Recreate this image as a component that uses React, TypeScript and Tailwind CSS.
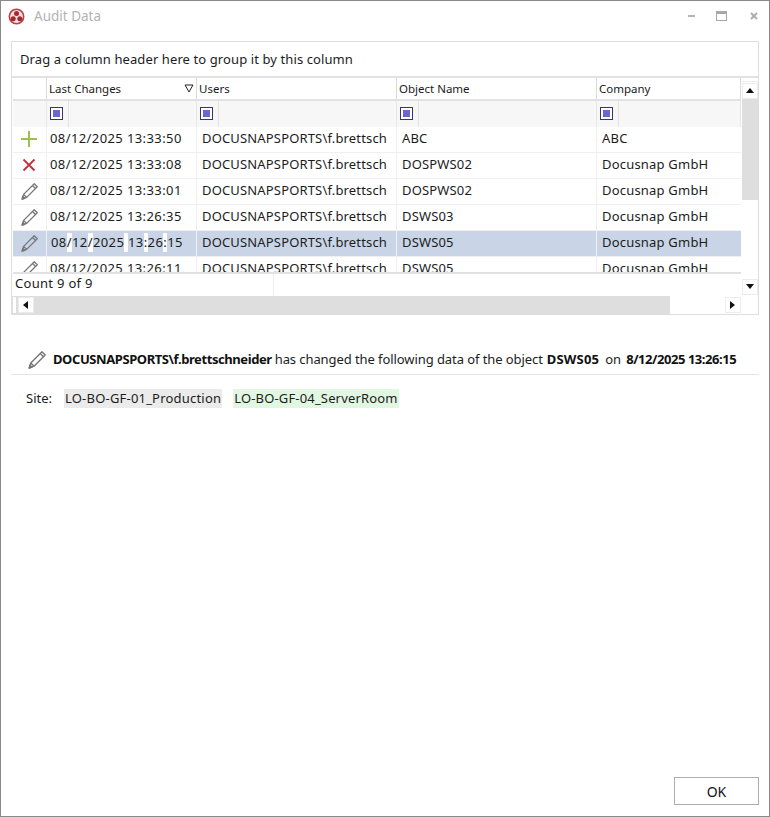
import React from "react";

const F = "font-['Noto_Sans','Open_Sans',sans-serif]";

function Pencil({ size = 20 }: { size?: number }) {
  return (
    <svg width={size} height={size} viewBox="0 0 20 20" fill="none" stroke="#777777" strokeWidth="1.4" strokeLinejoin="round">
      <path d="M15 1.8 L18.2 5 L7 16.2 L2.2 18 L3.8 13 Z" />
      <path d="M13.2 3.6 L16.4 6.8" />
      <path d="M3.8 13 L7 16.2" />
      <path d="M2.2 18 L3 15.3 L5 17.2 Z" fill="#777777" />
    </svg>
  );
}

function Plus() {
  return (
    <svg width="16" height="16" viewBox="0 0 16 16">
      <path d="M8 0 V16 M0 8 H16" stroke="#a0bd52" strokeWidth="2" />
    </svg>
  );
}

function Cross() {
  return (
    <svg width="14" height="14" viewBox="0 0 14 14">
      <path d="M1.5 1.5 L12.5 12.5 M12.5 1.5 L1.5 12.5" stroke="#c4303a" strokeWidth="1.8" />
    </svg>
  );
}

const rows = [
  { icon: "plus", date: "08/12/2025 13:33:50", obj: "ABC", co: "ABC" },
  { icon: "x", date: "08/12/2025 13:33:08", obj: "DOSPWS02", co: "Docusnap GmbH" },
  { icon: "p", date: "08/12/2025 13:33:01", obj: "DOSPWS02", co: "Docusnap GmbH" },
  { icon: "p", date: "08/12/2025 13:26:35", obj: "DSWS03", co: "Docusnap GmbH" },
  { icon: "p", date: "08/12/2025 13:26:15", obj: "DSWS05", co: "Docusnap GmbH", sel: true },
  { icon: "p", date: "08/12/2025 13:26:11", obj: "DSWS05", co: "Docusnap GmbH" },
];

function FilterCell({ w }: { w: string }) {
  return (
    <div className={`${w} shrink-0 flex items-center pl-[3px] border-r border-[#e6e6e6]`}>
      <div className="w-[13px] h-[13px] border border-[#37337a] bg-white flex items-center justify-center mb-[1px]">
        <div className="w-[7px] h-[7px] bg-[#6a66cf]" />
      </div>
      <div className="w-[1px] h-full bg-[#e3e3e3] ml-[5px]" />
    </div>
  );
}

function Head({ w, children, sort }: { w: string; children: string; sort?: boolean }) {
  return (
    <div className={`${w} shrink-0 flex items-center justify-between pl-[2px] pr-[2px] border-r border-[#dcdcdc] text-[11.5px] text-[#1a1a1a]`}>
      <span>{children}</span>
      {sort && (
        <svg width="10" height="9" viewBox="0 0 10 9">
          <path d="M1 1 H9 L5 8 Z" fill="none" stroke="#222" strokeWidth="1" />
        </svg>
      )}
    </div>
  );
}

function Gap({ children }: { children: string }) {
  return <span className="inline-block bg-white leading-[19px] h-[19px] whitespace-pre">{children}</span>;
}

function SelectedDate() {
  return (
    <span className="flex items-center h-[19px]">
      08<Gap>/</Gap>12<Gap>/</Gap>2025<Gap> </Gap>13<Gap>:</Gap>26<Gap>:</Gap>15
    </span>
  );
}

function Row({ r }: { r: (typeof rows)[number] }) {
  const bg = r.sel ? "bg-[#c9d5e6]" : "bg-white";
  return (
    <div className={`h-[26px] shrink-0 flex border-b border-[#f0f0f0] text-[13px] text-[#1c1c1c] ${bg}`}>
      <div className="w-[34px] shrink-0 flex items-center justify-center border-r border-[#f0f0f0] pb-[1px] pr-[1px]">
        {r.icon === "plus" ? <Plus /> : r.icon === "x" ? <Cross /> : <Pencil size={19} />}
      </div>
      <div className={`w-[150px] shrink-0 flex items-center border-r border-[#f0f0f0] tracking-[0.4px] pb-[2px] ${r.sel ? "pl-[4px]" : "pl-[3px]"} whitespace-nowrap`}>
        {r.sel ? <SelectedDate /> : r.date}
      </div>
      <div className="w-[200px] shrink-0 flex items-center pl-[5px] pb-[2px] tracking-[0.16px] border-r border-[#f0f0f0] overflow-hidden whitespace-nowrap">
        DOCUSNAPSPORTS\f.brettsch
      </div>
      <div className="w-[200px] shrink-0 flex items-center pl-[5px] pb-[2px] tracking-[0.16px] border-r border-[#f0f0f0] whitespace-nowrap">{r.obj}</div>
      <div className="w-[144px] shrink-0 flex items-center pl-[5px] pb-[2px] tracking-[0.2px] whitespace-nowrap">{r.co}</div>
    </div>
  );
}

function ArrowBtn({ dir }: { dir: "up" | "down" | "left" | "right" }) {
  const d = { up: "M0 6 L4 1 L8 6 Z", down: "M0 1 L8 1 L4 6 Z", left: "M6 0 L1 4 L6 8 Z", right: "M1 0 L6 4 L1 8 Z" }[dir];
  return (
    <div className="w-[16px] h-[16px] shrink-0 bg-white border border-[#ececec] flex items-center justify-center">
      <svg width="8" height="8" viewBox="0 0 8 8">
        <path d={d} fill="#111" />
      </svg>
    </div>
  );
}

export default function App() {
  return (
    <div className={`${F} w-[770px] h-[817px] bg-white border border-[#8a8a8a] flex flex-col overflow-hidden text-[#1c1c1c]`}>
      <div className="h-[30px] shrink-0 flex items-center pl-[7px] pr-[11px]">
        <svg width="17" height="17" viewBox="0 0 17 17">
          <circle cx="8.5" cy="8.5" r="7.2" fill="#f4dfe0" stroke="#b84148" strokeWidth="1.6" />
          <circle cx="8.5" cy="5.4" r="2.5" fill="#a5282f" />
          <circle cx="5.2" cy="10.8" r="2.5" fill="#a5282f" />
          <circle cx="11.8" cy="10.8" r="2.5" fill="#a5282f" />
        </svg>
        <span className="ml-[9px] text-[13.5px] text-[#b3b3b3]">Audit Data</span>
        <div className="ml-auto flex items-center">
          <div className="w-[7px] h-[2px] bg-[#b4b4b4]" />
          <div className="ml-[21px] w-[11px] h-[10px] border border-[#a8a8a8] border-t-[3px]" />
          <svg width="8" height="8" viewBox="0 0 8 8" className="ml-[23px]">
            <path d="M1 1 L7 7 M7 1 L1 7" stroke="#adadad" strokeWidth="2" />
          </svg>
        </div>
      </div>

      <div className="mt-[10px] mx-[10px] h-[274px] shrink-0 border border-[#dedede] flex flex-col">
        <div className="h-[36px] shrink-0 flex items-center pl-[8px] pt-[1px] text-[13px] tracking-[0.1px] border-b-2 border-[#e2e2e2]">
          Drag a column header here to group it by this column
        </div>
        <div className="flex-1 flex min-h-0">
          <div className="w-[729px] shrink-0 flex flex-col pl-[1px]">
            <div className="h-[23px] shrink-0 flex border-b-2 border-[#e2e2e2]">
              <Head w="w-[34px]">{""}</Head>
              <Head w="w-[150px]" sort>Last Changes</Head>
              <Head w="w-[200px]">Users</Head>
              <Head w="w-[200px]">Object Name</Head>
              <Head w="w-[144px]">Company</Head>
            </div>
            <div className="h-[26px] shrink-0 flex bg-[#f7f7f7]">
              <div className="w-[34px] shrink-0 border-r border-[#e6e6e6]" />
              <FilterCell w="w-[150px]" />
              <FilterCell w="w-[200px]" />
              <FilterCell w="w-[200px]" />
              <FilterCell w="w-[144px]" />
            </div>
            <div className="h-[145px] shrink-0 overflow-hidden flex flex-col">
              {rows.map((r, i) => (
                <Row key={i} r={r} />
              ))}
            </div>
            <div className="h-[25px] shrink-0 flex items-center border-t-2 border-[#e2e2e2] text-[13px] tracking-[0.3px] pl-[2px]">
              <div className="w-[259px] h-full flex items-center border-r border-[#ececec] pb-[3px]">Count 9 of 9</div>
            </div>
          </div>
          <div className="w-[16px] ml-[1px] shrink-0 flex flex-col">
            <div className="h-[4px] shrink-0 border-b border-[#ececec]" />
            <div className="h-[1px] shrink-0" />
            <ArrowBtn dir="up" />
            <div className="h-[101px] shrink-0 bg-[#dedede]" />
            <div className="flex-1" />
            <ArrowBtn dir="down" />
            <div className="h-[1px] shrink-0" />
          </div>
        </div>
        <div className="h-[18px] shrink-0 flex items-center pr-[17px]">
          <div className="w-[658px] h-[18px] shrink-0 bg-[#dedede] flex items-center pl-[1px]">
            <div className="w-[3px] h-[16px] bg-white" />
            <div className="ml-[2px]">
              <ArrowBtn dir="left" />
            </div>
          </div>
          <div className="flex-1" />
          <ArrowBtn dir="right" />
        </div>
      </div>

      <div className="mt-[31px] mx-[10px] h-[29px] shrink-0 flex items-center pl-[16px] pb-[1px] border-b border-[#e4e4e4] text-[13px] whitespace-nowrap">
        <Pencil size={20} />
        <span className="ml-[6px] font-bold tracking-[-0.42px] text-[#111]">DOCUSNAPSPORTS\f.brettschneider</span>
        <span className="ml-[3px] tracking-[-0.08px]">has changed the following data of the object</span>
        <span className="ml-[4px] font-bold tracking-[0.2px] text-[#111]">DSWS05</span>
        <span className="ml-[6px]">on</span>
        <span className="ml-[5px] font-bold tracking-[-0.45px] text-[#111]">8/12/2025 13:26:15</span>
      </div>

      <div className="mt-[14px] ml-[25px] flex items-center text-[13px] h-[19px]">
        <span className="w-[38px]">Site:</span>
        <span className="h-[19px] flex items-center px-[1px] bg-[#ebebeb] tracking-[0.2px]">LO-BO-GF-01_Production</span>
        <span className="ml-[11px] h-[19px] flex items-center px-[1px] bg-[#e1f7e1] tracking-[0.16px]">LO-BO-GF-04_ServerRoom</span>
      </div>

      <div className="mt-auto mb-[11px] mr-[10px] flex justify-end">
        <button className="w-[85px] h-[28px] border border-[#adadad] bg-white text-[14px] text-[#111]">OK</button>
      </div>
    </div>
  );
}
